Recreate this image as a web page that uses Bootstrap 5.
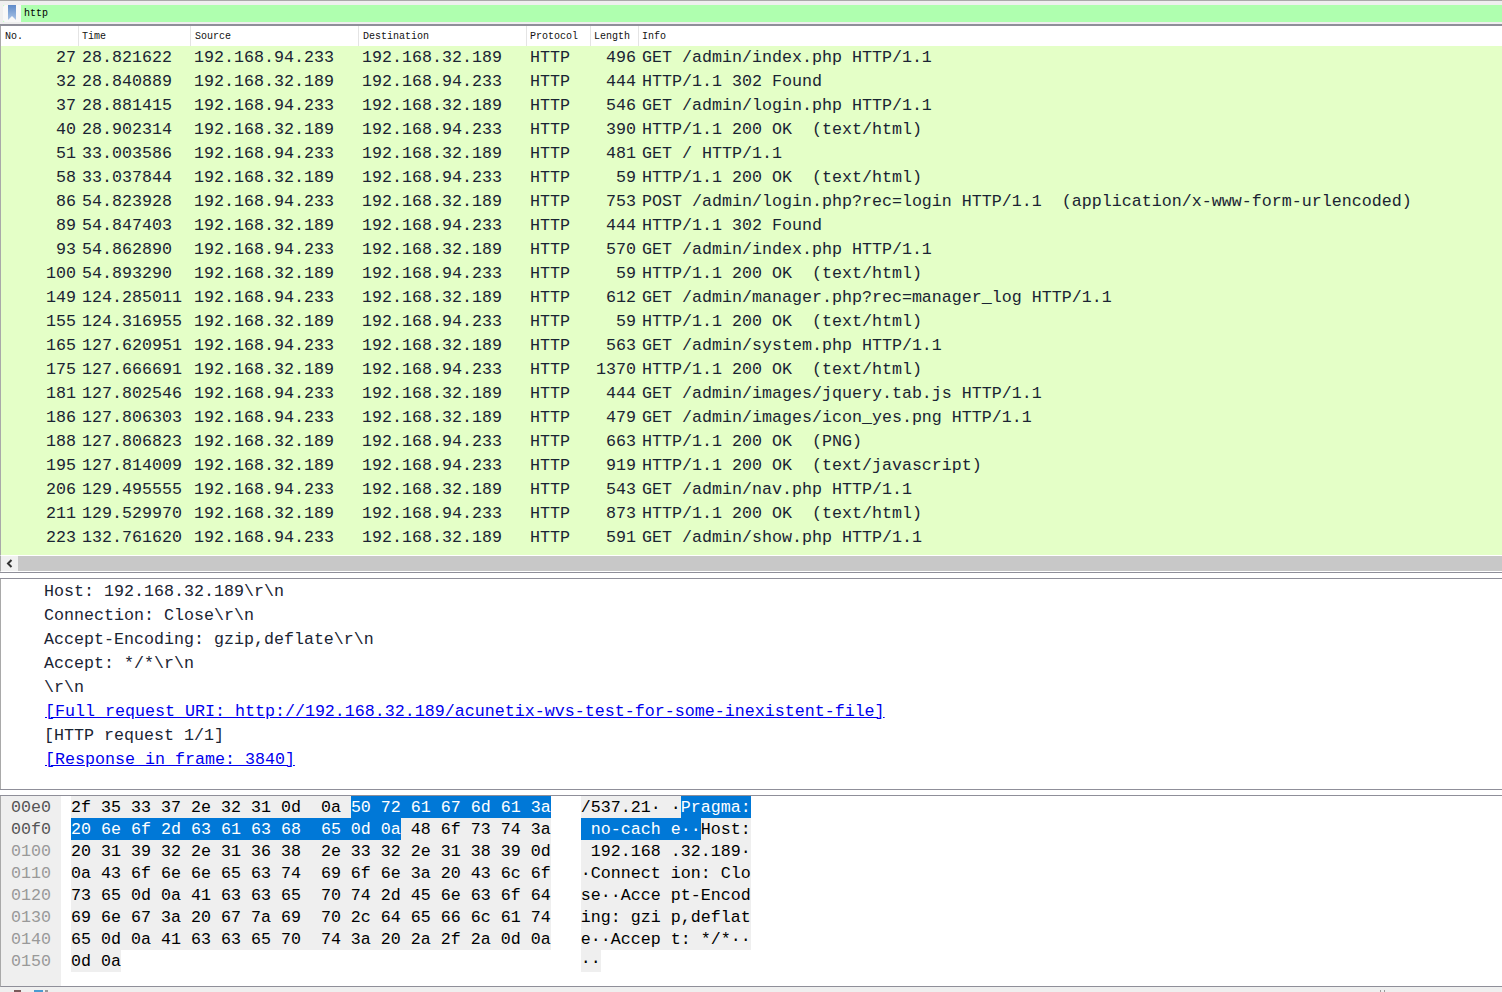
<!DOCTYPE html>
<html lang="en">
<head>
<meta charset="utf-8">
<title>Wireshark</title>
<link href="https://cdn.jsdelivr.net/npm/bootstrap@5.3.0/dist/css/bootstrap.min.css" rel="stylesheet">
<style>
html,body{height:992px;overflow:hidden;background:#fff}
body{font-family:"Liberation Mono",monospace;font-size:16.67px;color:#1a2433}
.ws-top{height:26px;background:#efefef;border-top:1px solid #a9a9a9;border-bottom:2px solid #8f8f99;padding:4px 0 2px 3px}
.ws-filter{height:17px;background:#afffaf;font-size:10px;line-height:17px;color:#000}
.ws-markbox{width:18px;height:17px;background:#f8f8f8;border-radius:2px 0 0 2px}
.ws-filter-text{padding-left:3px}
.ws-head{height:20px;background:#fff;font-size:10px;line-height:21px;color:#111;border-left:1px solid #a9a9a9}
.ws-h{height:20px;padding-left:4px;border-right:1px solid #e4e4e4;flex:none;overflow:hidden}
.c1{width:78px}.c2{width:112px;padding-left:3px}.c3{width:168px}.c4{width:168px}.c5{width:64px;padding-left:3px}.c6{width:48px;padding-left:3px}.c7{flex:1 1 auto;border-right:0;padding-left:3px}
.ws-list{height:510px;background:#e4ffc7;overflow:hidden;border-left:1px solid #a9a9a9;border-bottom:1px solid #fff}
.ws-row{height:24px;line-height:24px;white-space:pre}
.ws-row-last{padding-top:2px}
.d1{width:75px;text-align:right;flex:none}
.d2{width:112px;padding-left:6px;flex:none}
.d3{width:168px;padding-left:6px;flex:none}
.d4{width:174px;padding-left:6px;flex:none}
.d5{width:60px;flex:none}
.d6{width:46px;text-align:right;flex:none}
.d7{padding-left:6px;flex:none}
.ws-scroll{height:16px;background:#c8c8c8;border-left:1px solid #a9a9a9;border-bottom:1px solid #fff}
.ws-arrow{width:17px;height:15px;background:#f0f0f0}
.ws-sep{height:7px;background:#fff;border-top:1px solid #8f8f99;border-bottom:1px solid #8f8f99}
.ws-detail{height:210px;background:#fff;border-left:1px solid #a9a9a9;padding-left:43px;padding-top:1px}
.ws-line{height:24px;line-height:24px;white-space:pre}
.ws-detail a{color:#0000ee;text-decoration:underline;padding-left:1px}
.ws-sep2{height:7px;background:#fff;border-top:1px solid #8f8f99;border-bottom:1px solid #8f8f99}
.ws-hex{height:191px;background:#fff;border-left:1px solid #a9a9a9;border-bottom:1px solid #8f8f99}
.ws-gutter{width:60px;background:#efefef;padding-left:10px;flex:none}
.ws-hline{height:22px;line-height:24px;white-space:pre}
.off-on{color:#555}.off-dim{color:#999}
.ws-bytes{padding-left:10px;flex:none;color:#000}
.ws-ascii{padding-left:30px;flex:none;color:#000}
.shade{background:#efefef;display:inline-block;height:22px;vertical-align:top}
.sel{background:#0078d7;color:#fff;display:inline-block;height:22px;vertical-align:top}
.ws-status{height:5px;background:#efefef;overflow:hidden;padding-top:3px}
.st-a{margin-left:14px}.st-b{margin-left:13px}.st-c{margin-left:2px}.st-d{margin-left:1332px}
</style>
</head>
<body>
<div class="ws-top">
  <div class="ws-filter d-flex">
    <div class="ws-markbox d-flex justify-content-center">
      <svg width="8" height="16" viewBox="0 0 8 16"><defs><linearGradient id="bm" x1="0" y1="0" x2="0" y2="1"><stop offset="0" stop-color="#5f8bc9"/><stop offset="1" stop-color="#a9c3e6"/></linearGradient></defs><path d="M0 0H8V15L4 11L0 15Z" fill="url(#bm)"/></svg>
    </div>
    <span class="ws-filter-text">http</span>
  </div>
</div>
<div class="ws-head d-flex">
  <div class="ws-h c1">No.</div><div class="ws-h c2">Time</div><div class="ws-h c3">Source</div><div class="ws-h c4">Destination</div><div class="ws-h c5">Protocol</div><div class="ws-h c6">Length</div><div class="ws-h c7">Info</div>
</div>
<div class="ws-list" id="list"></div>
<div class="ws-scroll d-flex">
  <div class="ws-arrow d-flex align-items-center justify-content-center"><svg width="7" height="9" viewBox="0 0 7 9"><path d="M5.5 1L2 4.5L5.5 8" fill="none" stroke="#333" stroke-width="2"/></svg></div>
</div>
<div class="ws-sep"></div>
<div class="ws-detail">
<div class="ws-line">Host: 192.168.32.189\r\n</div>
<div class="ws-line">Connection: Close\r\n</div>
<div class="ws-line">Accept-Encoding: gzip,deflate\r\n</div>
<div class="ws-line">Accept: */*\r\n</div>
<div class="ws-line">\r\n</div>
<div class="ws-line"><a href="#">[Full request URI: http://192.168.32.189/acunetix-wvs-test-for-some-inexistent-file]</a></div>
<div class="ws-line">[HTTP request 1/1]</div>
<div class="ws-line"><a href="#">[Response in frame: 3840]</a></div>
</div>
<div class="ws-sep2"></div>
<div class="ws-hex d-flex">
  <div class="ws-gutter" id="off"></div>
  <div class="ws-bytes" id="hex"></div>
  <div class="ws-ascii" id="asc"></div>
</div>
<div class="ws-status d-flex align-items-start">
  <svg class="st-a" width="7" height="2"><rect width="7" height="2" fill="#7a5a5a"/></svg>
  <svg class="st-b" width="9" height="2"><rect width="9" height="2" fill="#4a9bd0"/></svg>
  <svg class="st-c" width="3" height="2"><rect width="3" height="2" fill="#999"/></svg>
  <svg class="st-d" width="6" height="2"><path d="M0 0H1V2H0ZM4 0H5V2H4Z" fill="#999"/></svg>
</div>
<script>
const rows=`27|28.821622|a|GET /admin/index.php HTTP/1.1|496
32|28.840889|b|HTTP/1.1 302 Found|444
37|28.881415|a|GET /admin/login.php HTTP/1.1|546
40|28.902314|b|HTTP/1.1 200 OK  (text/html)|390
51|33.003586|a|GET / HTTP/1.1|481
58|33.037844|b|HTTP/1.1 200 OK  (text/html)|59
86|54.823928|a|POST /admin/login.php?rec=login HTTP/1.1  (application/x-www-form-urlencoded)|753
89|54.847403|b|HTTP/1.1 302 Found|444
93|54.862890|a|GET /admin/index.php HTTP/1.1|570
100|54.893290|b|HTTP/1.1 200 OK  (text/html)|59
149|124.285011|a|GET /admin/manager.php?rec=manager_log HTTP/1.1|612
155|124.316955|b|HTTP/1.1 200 OK  (text/html)|59
165|127.620951|a|GET /admin/system.php HTTP/1.1|563
175|127.666691|b|HTTP/1.1 200 OK  (text/html)|1370
181|127.802546|a|GET /admin/images/jquery.tab.js HTTP/1.1|444
186|127.806303|a|GET /admin/images/icon_yes.png HTTP/1.1|479
188|127.806823|b|HTTP/1.1 200 OK  (PNG)|663
195|127.814009|b|HTTP/1.1 200 OK  (text/javascript)|919
206|129.495555|a|GET /admin/nav.php HTTP/1.1|543
211|129.529970|b|HTTP/1.1 200 OK  (text/html)|873
223|132.761620|a|GET /admin/show.php HTTP/1.1|591
229|132.795144|b|HTTP/1.1 200 OK  (text/html)|59`.split('\n');
const A='192.168.94.233',B='192.168.32.189';
document.getElementById('list').innerHTML=rows.map((r,k)=>{
  const [n,t,d,i,l]=r.split('|');
  const s=d==='a'?A:B,x=d==='a'?B:A;
  return '<div class="ws-row d-flex'+(k===rows.length-1?' ws-row-last':'')+'"><div class="d1">'+n+'</div><div class="d2">'+t+'</div><div class="d3">'+s+'</div><div class="d4">'+x+'</div><div class="d5">HTTP</div><div class="d6">'+l+'</div><div class="d7">'+i+'</div></div>';
}).join('');
const off=['00e0','00f0','0100','0110','0120','0130','0140','0150'];
document.getElementById('off').innerHTML=off.map((o,k)=>'<div class="ws-hline '+(k<2?'off-on':'off-dim')+'">'+o+'</div>').join('');
const hex=[
 '<span class="shade">2f 35 33 37 2e 32 31 0d  0a </span><span class="sel">50 72 61 67 6d 61 3a</span>',
 '<span class="sel">20 6e 6f 2d 63 61 63 68  65 0d 0a</span><span class="shade"> 48 6f 73 74 3a</span>',
 '<span class="shade">20 31 39 32 2e 31 36 38  2e 33 32 2e 31 38 39 0d</span>',
 '<span class="shade">0a 43 6f 6e 6e 65 63 74  69 6f 6e 3a 20 43 6c 6f</span>',
 '<span class="shade">73 65 0d 0a 41 63 63 65  70 74 2d 45 6e 63 6f 64</span>',
 '<span class="shade">69 6e 67 3a 20 67 7a 69  70 2c 64 65 66 6c 61 74</span>',
 '<span class="shade">65 0d 0a 41 63 63 65 70  74 3a 20 2a 2f 2a 0d 0a</span>',
 '<span class="shade">0d 0a</span>'];
document.getElementById('hex').innerHTML=hex.map(h=>'<div class="ws-hline">'+h+'</div>').join('');
const asc=[
 '<span class="shade">/537.21· ·</span><span class="sel">Pragma:</span>',
 '<span class="sel"> no-cach e··</span><span class="shade">Host:</span>',
 '<span class="shade"> 192.168 .32.189·</span>',
 '<span class="shade">·Connect ion: Clo</span>',
 '<span class="shade">se··Acce pt-Encod</span>',
 '<span class="shade">ing: gzi p,deflat</span>',
 '<span class="shade">e··Accep t: */*··</span>',
 '<span class="shade">··</span>'];
document.getElementById('asc').innerHTML=asc.map(a=>'<div class="ws-hline">'+a+'</div>').join('');
</script>
<script src="https://cdn.jsdelivr.net/npm/bootstrap@5.3.0/dist/js/bootstrap.bundle.min.js"></script>
</body>
</html>
